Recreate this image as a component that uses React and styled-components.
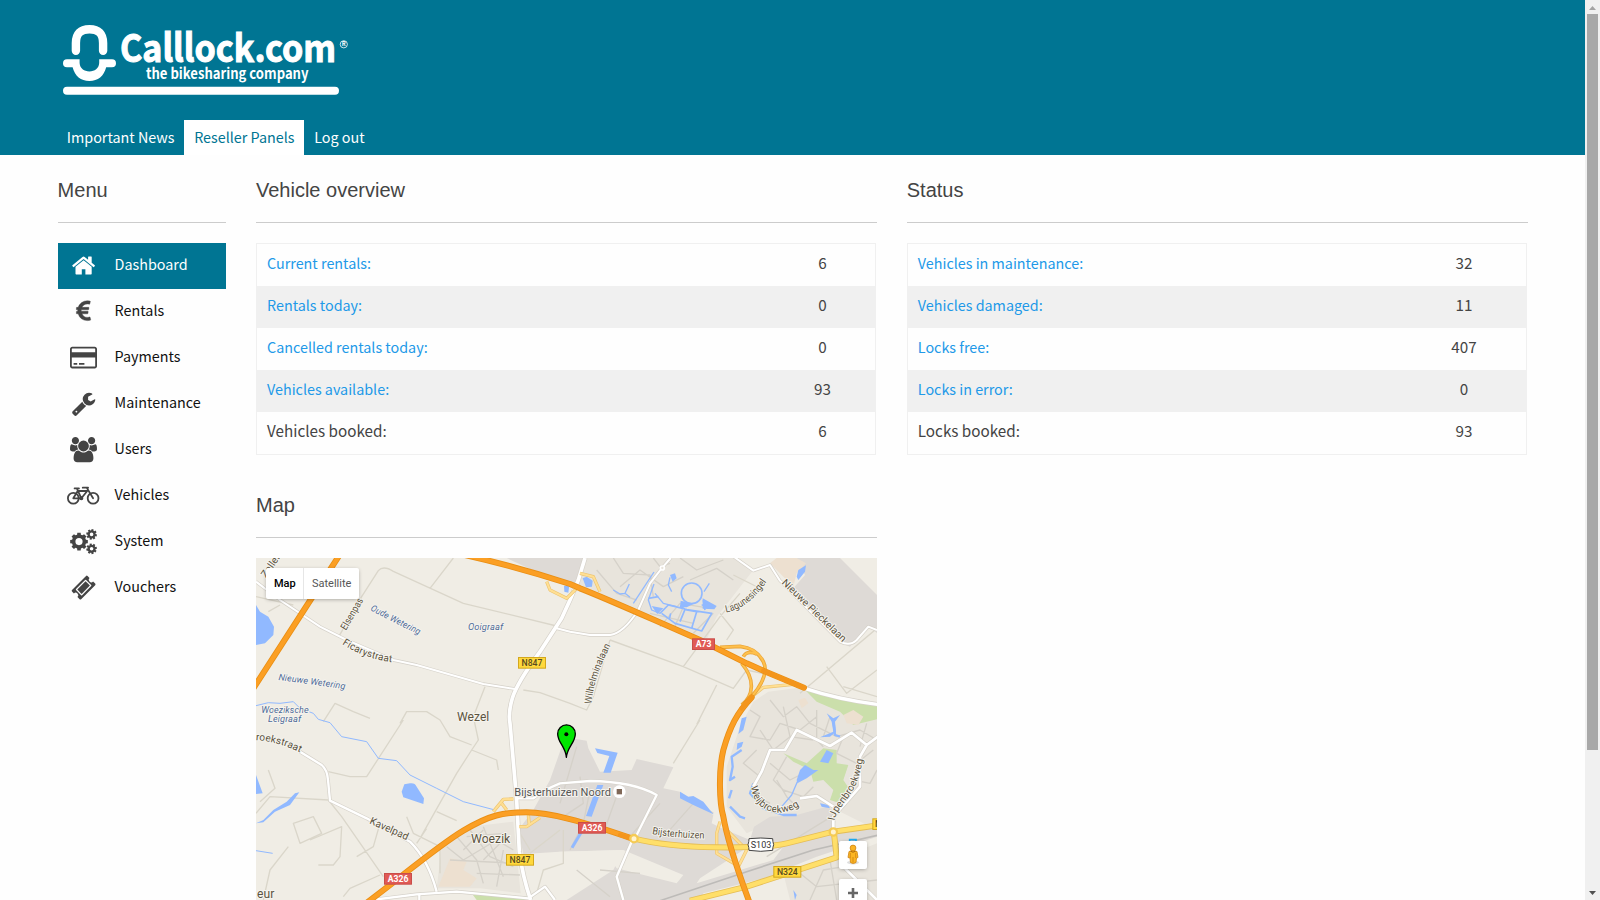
import React from "react";
import styled, { createGlobalStyle, css } from "styled-components";

const teal = "#007593";
const sans = '"Source Sans Pro", "Noto Sans CJK SC", sans-serif';

const GlobalStyle = createGlobalStyle`
  * { box-sizing: border-box; }
  html, body { margin: 0; height: 900px; overflow: hidden; background: #fefefe; }
  body { font-family: ${sans}; font-size: 14.35px; color: #444; }
`;

const Window = styled.div`
  display: flex;
  width: 1600px;
  height: 900px;
  overflow: hidden;
`;
const Page = styled.div`
  flex: 1;
  height: 900px;
  overflow: hidden;
`;
const Header = styled.header`
  display: flex;
  flex-direction: column;
  justify-content: space-between;
  height: 155px;
  padding: 20px 57px 0;
  background: ${teal};
`;
const Logo = styled.svg`
  display: block;
  width: 300px;
  height: 80px;
  text { font-family: ${sans}; fill: #fff; }
`;
const Tabs = styled.nav`
  display: flex;
`;
const Tab = styled.a`
  height: 35px;
  padding: 0 9.8px;
  line-height: 33px;
  white-space: nowrap;
  color: ${(p) => (p.$active ? teal : "#fff")};
  background: ${(p) => (p.$active ? "#fff" : "transparent")};
`;
const Columns = styled.main`
  display: grid;
  grid-template-columns: 168.4px 620.8px 621px;
  column-gap: 30px;
  padding: 20px 57px 0 57.6px;
`;
const Column = styled.div`
  min-width: 0;
`;
const Heading = styled.h2`
  margin: ${(p) => (p.$spaced ? "35px" : "0")} 0 20px;
  padding-bottom: 17px;
  border-bottom: 1px solid #ccc;
  font: 400 20px/30px "Liberation Sans", Arial, sans-serif;
  color: #444;
`;
const MenuItem = styled.a`
  display: grid;
  grid-template-columns: 51px 1fr;
  column-gap: 6px;
  align-items: center;
  height: 46px;
  color: ${(p) => (p.$active ? "#fff" : "#111")};
  background: ${(p) => (p.$active ? teal : "transparent")};
  svg {
    justify-self: center;
    color: ${(p) => (p.$active ? "#fff" : "#444")};
  }
`;
const MenuLabel = styled.span`
  line-height: 20px;
  padding-bottom: 5px;
`;
const Glyph = styled.svg`
  display: block;
  width: ${(p) => p.$w}px;
  height: 25.2px;
  fill: currentColor;
  overflow: visible;
`;
const Table = styled.div`
  width: 620px;
  border: 1px solid #f0f0f0;
`;
const Row = styled.div`
  display: grid;
  grid-template-columns: 1fr ${(p) => p.$valueWidth}px;
  height: 42px;
  line-height: 37px;
  font-size: 15.25px;
  &:nth-child(even) { background: #f0f0f0; }
`;
const Label = styled.span`
  padding-left: 10px;
  ${(p) => p.$link && css`
    font-size: 14.35px;
    color: #2199e8;
  `}
`;
const Value = styled.span`
  text-align: center;
`;
const MapBox = styled.div`
  position: relative;
  height: 342px;
  overflow: hidden;
`;
const MapSvg = styled.svg`
  display: block;
  width: 621px;
  height: 342px;
  font-family: Roboto, sans-serif;
`;
const MapType = styled.div`
  position: absolute;
  top: 10px;
  left: 10px;
  display: flex;
  height: 31px;
  border-radius: 2px;
  background: #fff;
  box-shadow: 0 1px 4px -1px rgba(0, 0, 0, 0.4);
  font: 11px/31px Roboto, sans-serif;
`;
const TypeButton = styled.span`
  padding: 0 7.7px 0 ${(p) => (p.$active ? 8 : 7.6)}px;
  color: ${(p) => (p.$active ? "#000" : "#565656")};
  font-weight: ${(p) => (p.$active ? 500 : 400)};
  & + & { border-left: 1px solid #e6e6e6; }
`;
const MapTools = styled.div`
  position: absolute;
  top: 283px;
  right: 10px;
  display: grid;
  gap: 10px;
`;
const Tool = styled.div`
  display: grid;
  place-items: center;
  width: 28px;
  height: 28px;
  border-radius: 2px;
  background: #fff;
  box-shadow: 0 1px 4px -1px rgba(0, 0, 0, 0.4);
`;
const Scrollbar = styled.div`
  display: flex;
  flex-direction: column;
  align-items: center;
  width: 15px;
  height: 900px;
  background: #f0f0f0;
`;
const Arrow = styled.svg`
  display: block;
  width: 15px;
  height: 14px;
`;
const Thumb = styled.div`
  width: 11px;
  height: 736px;
  margin-bottom: auto;
  background: #a8a8a8;
`;

function gear(cx, cy, outer, inner, hole, turn = 0) {
  const pts = [];
  for (let i = 0; i < 8; i++) {
    const a = (i * Math.PI) / 4 + turn;
    [[-0.27, inner], [-0.19, outer], [0.19, outer], [0.27, inner]].forEach(([d, r]) =>
      pts.push(`${(cx + r * Math.cos(a + d)).toFixed(1)} ${(cy + r * Math.sin(a + d)).toFixed(1)}`)
    );
  }
  return `M${pts.join("L")}ZM${cx + hole} ${cy}a${hole} ${hole} 0 1 0 ${-2 * hole} 0a${hole} ${hole} 0 1 0 ${2 * hole} 0Z`;
}

const icons = {
  home: [1792, <path d="M1472 992v480q0 26-19 45t-45 19h-384v-384h-256v384h-384q-26 0-45-19t-19-45v-480q0-1 .5-3t.5-3l575-474 575 474q1 2 1 6zm223-69l-62 74q-8 9-21 11h-3q-13 0-21-7l-692-577-692 577q-12 8-24 7-13-2-21-11l-62-74q-8-10-7-23.5t11-21.5l719-599q32-26 76-26t76 26l244 204v-195q0-14 9-23t23-9h192q14 0 23 9t9 23v408l219 182q10 8 11 21.5t-7 23.5z" />],
  euro: [1792, <path stroke="currentColor" strokeWidth="30" d="M1360 1307l35 159q3 12-3 22.5t-17 14.5l-5 1q-4 2-10.5 3.5t-16 4.5-21.5 5.5-25.5 5-30 5-33.5 4.5-36.5 3-38.5 1q-234 0-409-130.5t-238-351.5h-95q-13 0-22.5-9.5t-9.5-22.5v-113q0-13 9.5-22.5t22.5-9.5h66q-2-57 1-105h-67q-14 0-23-9t-9-23v-114q0-14 9-23t23-9h98q67-210 243.5-338t400.5-128q102 0 194 23 11 3 20 15 6 11 3 24l-43 159q-3 13-14 19.5t-24 2.5l-4-1q-4-1-11.5-2.5l-17.5-3.5-22.5-3.5-26-3-29-2.5-29.5-1q-126 0-226 64t-150 176h468q16 0 25 12 10 12 7 26l-24 114q-5 26-32 26h-488q-3 37 0 105h459q15 0 25 12 9 12 6 27l-24 112q-2 11-11 18.5t-20 7.5h-387q48 117 149.5 185.5t228.5 68.5q18 0 36-1.5t33.5-3.5 29.5-4.5 24.5-5 18.5-4.5l12-3 5-2q13-5 26 2 12 7 15 21z" />],
  card: [1920, <path fillRule="evenodd" d="M160 128h1600q66 0 113 47t47 113v1216q0 66-47 113t-113 47H160q-66 0-113-47T0 1504V288q0-66 47-113t113-47zm0 128q-32 0-32 32v224h1664V288q0-32-32-32zM128 896v608q0 32 32 32h1600q32 0 32-32V896zM256 1408v-128h256v128zm384 0v-128h384v128z" />],
  wrench: [1792, <path d="M448 1472q0-26-19-45t-45-19-45 19-19 45 19 45 45 19 45-19 19-45zm644-420l-682 682q-37 37-90 37-52 0-91-37l-106-108q-38-36-38-90 0-53 38-91l681-681q39 98 114.5 173.5t173.5 114.5zm634-435q0 39-23 106-47 134-164.5 217.5t-258.5 83.5q-185 0-316.5-131.5t-131.5-316.5 131.5-316.5 316.5-131.5q58 0 121.5 16.5t107.5 46.5q16 11 16 28t-16 28l-293 169v224l193 107q5-3 79-48.5t135.5-81 70.5-35.5q15 0 23.5 10t8.5 25z" />],
  users: [1920, <path d="M593 896q-162 5-265 128h-134q-82 0-138-40.5t-56-118.5q0-353 124-353 6 0 43.5 21t97.5 42.5 119 21.5q67 0 133-23-5 37-5 66 0 139 81 256zm1071 637q0 120-73 189.5t-194 69.5h-874q-121 0-194-69.5t-73-189.5q0-53 3.5-103.5t14-109 26.5-108.5 43-97.5 62-81 85.5-53.5 111.5-20q10 0 43 21.5t73 48 107 48 135 21.5 135-21.5 107-48 73-48 43-21.5q61 0 111.5 20t85.5 53.5 62 81 43 97.5 26.5 108.5 14 109 3.5 103.5zm-1024-1277q0 106-75 181t-181 75-181-75-75-181 75-181 181-75 181 75 75 181zm704 384q0 159-112.5 271.5t-271.5 112.5-271.5-112.5-112.5-271.5 112.5-271.5 271.5-112.5 271.5 112.5 112.5 271.5zm576 225q0 78-56 118.5t-138 40.5h-134q-103-123-265-128 81-117 81-256 0-29-5-66 66 23 133 23 59 0 119-21.5t97.5-42.5 43.5-21q124 0 124 353zm-128-609q0 106-75 181t-181 75-181-75-75-181 75-181 181-75 181 75 75 181z" />],
  bike: [2304, (
    <g fill="none" stroke="currentColor" strokeWidth="128" strokeLinecap="round" strokeLinejoin="round">
      <circle cx="448" cy="1088" r="384" />
      <circle cx="1856" cy="1088" r="384" />
      <path d="M448 1088L760 570H1440L1020 1088H448M1020 1088L700 390M540 384H850M1856 1088L1400 330H1120M1400 330H1500" />
      <circle cx="1020" cy="1088" r="80" fill="currentColor" />
    </g>
  )],
  cogs: [1920, <path fillRule="evenodd" d={gear(640, 896, 640, 510, 256) + gear(1536, 384, 384, 290, 128, 0.2) + gear(1536, 1408, 384, 290, 128, -0.2)} />],
  ticket: [1792, (
    <g transform="rotate(-45 896 896)">
      <path fillRule="evenodd" d="M190 436H1602Q1680 436 1680 514V706A180 180 0 0 0 1680 1066V1278Q1680 1356 1602 1356H190Q112 1356 112 1278V1066A180 180 0 0 0 112 706V514Q112 436 190 436ZM440 590Q390 590 390 640V1152Q390 1202 440 1202H1352Q1402 1202 1402 1152V640Q1402 590 1352 590Z" />
      <rect x="480" y="680" width="832" height="432" />
    </g>
  )],
};

function Icon({ name }) {
  const [width, shape] = icons[name];
  return (
    <Glyph $w={(width * 25.2) / 1792} viewBox={`0 0 ${width} 1792`}>
      {shape}
    </Glyph>
  );
}

const menu = [
  ["Dashboard", "home"],
  ["Rentals", "euro"],
  ["Payments", "card"],
  ["Maintenance", "wrench"],
  ["Users", "users"],
  ["Vehicles", "bike"],
  ["System", "cogs"],
  ["Vouchers", "ticket"],
];
const overview = [
  ["Current rentals:", 6],
  ["Rentals today:", 0],
  ["Cancelled rentals today:", 0],
  ["Vehicles available:", 93],
  ["Vehicles booked:", 6],
];
const status = [
  ["Vehicles in maintenance:", 32],
  ["Vehicles damaged:", 11],
  ["Locks free:", 407],
  ["Locks in error:", 0],
  ["Locks booked:", 93],
];

function StatTable({ rows, valueWidth }) {
  return (
    <Table>
      {rows.map(([label, value], i) => (
        <Row key={label} $valueWidth={valueWidth}>
          <Label $link={i < rows.length - 1}>{label}</Label>
          <Value>{value}</Value>
        </Row>
      ))}
    </Table>
  );
}

/* Map drawing units are a third of a pixel. */
const areas = [
  ["#dedad6", "M770 24H1010L975 115L900 85ZM1640 24H1770L1881 135V250L1855 225L1800 290L1765 275L1630 115L1665 75Z"],
  ["#e8e4dc", "M1008 24H1465L1510 60L1440 150L1400 200L1365 280L1180 195L978 110ZM1510 455L1555 425L1660 412L1740 460L1881 495V840L1760 780L1600 800L1490 850L1430 770L1430 650L1470 530Z"],
  ["#ede0d0", "M1560 40L1580 24H1640L1668 40L1640 70L1630 110L1590 70Z"],
  ["#dedad6", "M945 562L1010 572L1015 595L1050 665L1145 660L1160 627L1270 652L1240 715L1290 725L1390 795L1385 820L1415 835L1500 870L1512 830L1560 800L1640 795L1730 770L1760 790L1750 850L1881 830V860L1700 920L1600 960L1560 1000L1350 1050H950L1090 960L1120 900L930 905L820 912L805 840L850 780L900 690Z"],
  ["#e8e4dc", "M575 890L660 830L790 815L812 1030L690 1015L560 1015ZM1600 970L1700 935L1780 920L1881 880V1050H1590Z"],
  ["#ede0d0", "M600 925L650 935L640 960L680 985L660 1010H565Z"],
  ["#f0ede5", "M930 905L1120 900L1300 975L1280 1000L1100 955L1090 940L965 1000L820 1050V920ZM1480 900L1600 890L1570 930L1340 1000L1350 985ZM1360 1030L1600 970L1620 1050H1350Z"],
  ["#cbdfab", "M1660 415L1760 440L1881 465V508L1810 525L1770 485L1700 455ZM1600 610L1670 640L1720 595L1760 600V640L1795 645L1780 690L1800 720L1770 760L1740 750L1750 720L1720 690L1690 695L1680 660L1630 635ZM665 1030L830 1040V1050H680Z"],
  ["#ede0d0", "M1780 495L1810 480L1840 500L1825 525L1790 520ZM1645 450L1665 443L1675 460L1655 475Z"],
];
const minor = "M18 140L130 165M55 185L90 165M265 262L335 140L385 62Q400 45 430 64L640 160L920 228M540 115L610 24M820 420L870 428L960 460L1010 480L1030 440L1080 270M705 410L670 500L685 570L665 600L620 670L510 865M220 515L255 460L310 485L360 505M450 520L470 485L530 485L570 510L600 560L665 585M665 600L740 630L745 660M560 785L620 812M470 800L490 850L570 890V970M530 835L500 880M460 510L350 680L300 680L235 665M18 790L60 740L235 750L275 800L400 980M55 660L75 715L30 755M130 820L190 800L215 850L150 880ZM115 890L60 960L40 1050M205 945H250L270 920L275 830L180 870M390 820L370 890L320 920M280 1040L300 1015L390 975M1080 270L1300 350L1450 415L1490 360L1560 375M1300 350L1410 200L1470 130M1340 524L1400 405M1270 640L1350 510M1650 430L1881 235M1730 350L1790 430L1881 360M1780 410L1881 440M1450 75L1540 120M1410 190L1450 240L1430 270M810 850L840 900M840 910L930 840M860 1030L880 960L940 940V840";
const streets = [
  "M1090 24L1120 70L1200 75L1210 140M1110 110L1170 60L1240 110L1300 80M1040 60L1100 130L1160 150M1210 24L1230 50L1260 40M1290 24L1340 60L1420 30M1320 90L1400 55L1450 90M1230 230L1290 160L1380 175M1270 240L1300 170M1330 250L1390 190M1200 190L1330 220",
  "M1500 480L1530 500L1500 560L1560 570L1590 520L1650 540L1700 500M1560 450L1600 500L1640 470L1680 520L1760 560L1830 540L1881 570M1520 600L1480 640L1530 680L1500 730L1560 760M1560 640L1620 690L1680 660M1600 720L1660 740L1690 710M1690 560L1720 590M1780 560L1760 610L1820 640L1870 600M1810 690L1860 700L1881 660M1580 690L1610 740L1640 770M1530 540L1570 600L1620 560L1690 570M1600 470L1620 560M1700 480V570M1740 500L1720 560M1850 520L1830 590M1610 620L1570 690L1600 720",
  "M590 890L640 930L740 870L790 900M620 860L680 930L700 1000M660 840L720 920L790 950M700 830L760 980M600 930L800 940M680 970L810 975M1650 970L1700 1010L1881 990M1740 930L1760 1050M1680 1050L1720 960L1840 940M650 860L760 850M640 900L700 840M740 1010L760 900M700 930L770 860",
  "M980 590L930 760M990 680L1000 760L940 800M1060 850L1110 710M1020 720L1000 820L960 900M1130 870L1230 760M1250 850L1330 760M1050 960L1170 970M1550 920L1760 790M1330 750L1390 790M980 960L1080 1040",
];
const whiteRoads = [
  ["M1005 24L985 90L960 150L935 205L870 305Q800 400 787 445T780 520L800 750L808 905Q818 980 842 1050", 11],
  ["M18 95L90 150L210 230L290 270L430 330L500 345L700 402L795 417M920 235L960 245L1020 255H1080Q1120 250 1165 180L1200 100L1235 55L1262 24", 6],
  ["M1440 12L1510 62L1560 45L1590 92L1770 275Q1800 290 1820 270L1855 230L1881 240", 6],
  ["M1664 415Q1770 450 1890 464", 10],
  ["M150 605L215 645Q232 660 234 690L240 752L350 805L480 875Q535 930 560 1025M365 1050L500 1033L620 1025L835 1045L885 1010L915 1050M508 1035V1050", 7],
  ["M800 745H850Q880 720 930 700L1020 693Q1150 695 1220 735L1160 855L1145 875L1100 980L1120 1050", 7],
  ["M1510 710L1535 665L1560 600L1605 600L1640 540L1740 588L1805 548L1850 585L1890 555M1850 585L1830 620V710L1750 800V845M1650 745L1700 738L1750 770M1785 955L1881 1050", 8],
];
const water = "M18 165L30 185L55 200L72 230L70 255L45 280L18 285ZM480 700Q495 698 500 710L522 745L520 762L460 742L455 725L463 703ZM18 675L38 730L18 732ZM148 727L120 765L75 785L40 817L18 820L40 810L70 780L110 755L135 730ZM1035 595L1103 608L1082 668H1060L1078 618L1042 609ZM1042 705H1060L1025 800L1008 798ZM1290 725L1315 740L1330 738L1360 755L1390 793L1330 765L1290 745ZM1640 80L1645 60L1668 46L1665 65L1645 90ZM998 85L1010 80L1028 92L1026 110L1008 112ZM942 108L958 104L955 128L943 125ZM1640 690L1650 660L1665 645L1690 660H1705L1670 685L1642 700ZM1730 490L1750 505L1770 495L1755 515L1758 545L1740 560L1710 562L1750 545L1745 515ZM1730 600L1750 610L1735 640L1710 635ZM1462 580L1480 575L1475 590L1460 600ZM1475 505L1490 500L1480 540L1465 552ZM1260 75L1275 70L1280 85L1268 95ZM1710 760L1735 765L1740 775L1715 770ZM1630 1020L1640 1035L1635 1050Z";
const canals = [
  ["M18 467L55 458L90 460L130 455L150 475L190 490L205 508L240 518L275 560L350 575L385 625L440 632L480 675L560 715L640 755L735 780M18 902L68 910", 3],
  ["M1090 120L1110 132L1125 130L1140 142M1125 130L1138 102M1150 160L1212 66M1260 82L1255 105L1265 125M1212 102L1195 150L1205 180L1230 190M1215 130L1240 160L1280 170M1362 125L1378 100", 4],
  ["M1195 145L1225 140M1230 190L1255 165L1310 178M1235 190L1275 220L1355 243L1385 190L1305 178L1290 215M1300 155L1292 170L1310 180L1340 185L1325 235M1262 190L1258 208M1355 165L1395 168M1360 150L1365 180", 5],
  ["M1475 600L1445 620L1448 650L1440 690L1455 680M1437 745L1445 720M1440 770L1470 800L1485 805M1510 700L1500 730L1540 775L1600 795H1640M1750 510L1755 555L1770 560", 7],
  ["M1642 695L1625 735L1595 770", 4],
  ["M1005 828L966 893", 9],
];
const motorways = "M640 14Q800 50 960 102L990 115C1080 150 1200 205 1350 270L1490 340L1540 362L1662 413M268 16L160 183L10 415M1505 442C1460 490 1440 530 1420 600C1405 660 1408 760 1420 800C1430 860 1470 980 1498 1056M340 1066C450 985 560 890 640 842S760 787 830 787S1000 815 1145 865";
const yellowRoads = "M1150 865Q1250 890 1400 892T1610 880L1750 845L1890 825M1320 1052L1490 1010L1760 922L1752 850";
const ramps = "M1410 292L1470 289Q1520 295 1540 335T1505 440M1475 340Q1505 375 1504 410T1475 465M1480 320Q1490 300 1520 312";
const paleRamps = "M1505 440L1540 412L1630 403M990 70L1030 80L1050 125M980 115L950 145L900 120L890 95M790 747L760 748L730 785M755 760L770 780M808 830H830L870 803M835 795L838 825M1410 815L1400 850V910L1460 945M1430 840L1490 900L1460 960";

const roadText = "#5c5340";
const waterText = "#4e6b99";
const labels = [
  { t: "Oude Wetering", d: "M360 180Q440 222 530 266", w: 164, c: waterText, i: 1, s: 27 },
  { t: "Nieuwe Wetering", d: "M85 390Q180 402 300 420", w: 202, c: waterText, i: 1, s: 27 },
  { t: "Ooigraaf", d: "M654 240H800", w: 106, c: waterText, i: 1, s: 27 },
  { t: "Woeziksche", d: "M34 490H250", w: 142, c: waterText, i: 1, s: 27 },
  { t: "Leigraaf", d: "M54 517H250", w: 100, c: waterText, i: 1, s: 27 },
  { t: "Elsenpas", d: "M288 242L350 135", w: 105, s: 30 },
  { t: "Zellen", d: "M48 85L110 -5", w: 85, s: 30 },
  { t: "Ficarystraat", d: "M276 282Q350 330 440 338", w: 160, s: 30 },
  { t: "Wilhelminalaan", d: "M95 462Q98 390 155 280", x: 930, w: 186, s: 30 },
  { t: "Lagunesingel", d: "M498 187Q570 175 627 84", x: 930, w: 157, s: 30 },
  { t: "Nieuwe Pieckelaan", d: "M664 100L854 284", x: 930, w: 255, s: 30 },
  { t: "broekstraat", d: "M0 570Q80 570 158 612", w: 156, s: 30 },
  { t: "Kavelpad", d: "M357 820L490 880", w: 124, s: 31 },
  { t: "Bijsterhuizen", d: "M276 852Q350 865 450 866", x: 930, w: 158, s: 30 },
  { t: "Weijbroekweg", d: "M573 710C585 800 680 810 740 750", x: 930, w: 192, s: 30 },
  { t: "IJpenbroekweg", d: "M824 812C830 760 905 740 910 600", x: 930, w: 206, s: 30 },
  { t: "Wezel", d: "M621 513H800", w: 97, s: 36 },
  { t: "Woezik", d: "M663 879H900", w: 118, s: 36 },
  { t: "Bijsterhuizen Noord", d: "M793 737H1200", w: 290, s: 33, c: "#555" },
  { t: "eur", d: "M21 1045H200", w: 52, s: 36 },
];
const shields = [
  ["A73", 1326, 265, 69, "#e05a55", "#c94d49", "#fff"],
  ["A326", 984, 816, 84, "#e05a55", "#c94d49", "#fff"],
  ["A326", 402, 969, 84, "#e05a55", "#c94d49", "#fff"],
  ["N847", 804, 321, 84, "#ffd83d", "#d3a71d", "#574a20"],
  ["N847", 768, 912, 84, "#ffd83d", "#d3a71d", "#574a20"],
  ["N324", 1570, 948, 84, "#ffd83d", "#d3a71d", "#574a20"],
];

function CityMap() {
  return (
    <MapSvg viewBox="18 24 1863 1026" preserveAspectRatio="none">
      <rect x="18" y="24" width="1863" height="1026" fill="#f0ede5" />
      {areas.map(([fill, d]) => <path key={d} fill={fill} d={d} />)}
      <g fill="none" strokeLinejoin="round">
        <path d={minor} stroke="#dad6ca" strokeWidth="4" />
        {streets.map((d) => <path key={d} d={d} stroke="#d5d1c9" strokeWidth="4" />)}
        <circle cx="1325" cy="130" r="31" stroke="#91b9ff" strokeWidth="5" />
        {canals.map(([d, w]) => <path key={d} d={d} stroke="#91b9ff" strokeWidth={w} />)}
        <path d={water} fill="#91b9ff" />
        <path d="M1358 145L1400 168L1393 178L1358 176ZM1205 168L1240 175L1222 192ZM1292 152L1312 158L1335 160L1310 172H1290Z" fill="#91b9ff" />
        <path d="M1230 1052L1490 965L1690 900L1885 855" stroke="#bdbbb8" strokeWidth="5" />
        {whiteRoads.map(([d, w]) => <path key={d} d={d} stroke="#d5d1c9" strokeWidth={w + 4} />)}
        {whiteRoads.map(([d, w]) => <path key={d} d={d} stroke="#fff" strokeWidth={w} />)}
        <path d={paleRamps} stroke="#edc572" strokeWidth="10" />
        <path d={paleRamps} stroke="#ffdf93" strokeWidth="6" />
        <path d={yellowRoads} stroke="#e5bd54" strokeWidth="18" />
        <path d={yellowRoads} stroke="#ffdf69" strokeWidth="13" />
        <path d={ramps} stroke="#e9a53a" strokeWidth="11" />
        <path d={ramps} stroke="#ffc04c" strokeWidth="6" />
        <path d={motorways} stroke="#e98f15" strokeWidth="18" strokeLinecap="round" />
        <path d={motorways} stroke="#fb9f24" strokeWidth="13" strokeLinecap="round" />
        <path d="M1540 362L1662 413M1505 442L1475 475M1110 855L1145 865" stroke="#f3951c" strokeWidth="13" strokeLinecap="round" />
        <circle cx="1152" cy="866" r="11" fill="#fff3cf" stroke="#f5cb55" strokeWidth="7" />
        <circle cx="1750" cy="846" r="11" fill="#fff3cf" stroke="#f5cb55" strokeWidth="7" />
        <circle cx="1237" cy="54" r="6" fill="#e8e4dc" stroke="#fff" strokeWidth="5" />
      </g>
      <path d="M1799 884V869H1818V884" fill="none" stroke="#1cabf2" strokeWidth="5" />
      {labels.map(({ t, d, w, s, i, c = roadText, x = 0 }, n) => (
        <g key={t} transform={`translate(${x} 0)`}>
          <path id={`label-${n}`} d={d} fill="none" />
          <text fontSize={s} fontStyle={i ? "italic" : "normal"} fill={c} stroke="#f5f3ee" strokeWidth="6" strokeLinejoin="round" paintOrder="stroke">
            <textPath href={`#label-${n}`} textLength={w} lengthAdjust="spacingAndGlyphs">{t}</textPath>
          </text>
        </g>
      ))}
      {shields.map(([t, x, y, w, fill, edge, color]) => (
        <g key={`${x}-${y}`}>
          <rect x={x + 1.5} y={y + 1.5} width={w - 3} height="32" fill={fill} stroke={edge} strokeWidth="3" />
          <text x={x + w / 2} y={y + 27} fontSize="26" fontWeight={color === "#fff" ? 700 : 500} textAnchor="middle" fill={color}>{t}</text>
        </g>
      ))}
      <rect x="1868.5" y="806.5" width="40" height="32" fill="#ffd83d" stroke="#d3a71d" strokeWidth="3" />
      <text x="1875" y="832" fontSize="26" fontWeight="500" fill="#574a20">N</text>
      <path d="M1497 866Q1532 862 1568 866Q1568 875 1571 884Q1568 892 1568 901Q1532 907 1497 901Q1497 892 1494 884Q1497 875 1497 866Z" fill="#fff" stroke="#444" strokeWidth="3" />
      <text x="1533" y="894" fontSize="27" textAnchor="middle" fill="#333">S103</text>
      <circle cx="1108" cy="725" r="19" fill="#fff" />
      <rect x="1100" y="717" width="16" height="16" fill="#806858" />
      <path d="M949 622C947 590 923 578 923 551A26.5 26.5 0 0 1 976 551C976 578 952 590 949 622Z" fill="#00e600" stroke="#000" strokeWidth="4" strokeLinejoin="round" />
      <circle cx="949" cy="553" r="6" />
    </MapSvg>
  );
}

export default function App() {
  return (
    <Window>
      <GlobalStyle />
      <Page>
        <Header>
          <Logo viewBox="57 20 300 80">
            <g fill="none" stroke="#fff" strokeLinecap="round">
              <path d="M75.9 50.8V43Q75.9 29.2 89.5 29.2T103.1 43V50.8" strokeWidth="8.4" />
              <path d="M67 90.8H335" strokeWidth="8" />
            </g>
            <path d="M67 59.2H79.6V63C80 68.5 84 71.4 89.4 71.4S98.8 68.5 99.2 63V59.2H112A4 4 0 0 1 112 67.2H106.2C104 76 98 80.9 89.4 80.9S74.8 76 72.6 67.2H67A4 4 0 0 1 67 59.2Z" fill="#fff" />
            <text x="120" y="61.5" fontSize="38" fontWeight="700" textLength="216" lengthAdjust="spacingAndGlyphs" stroke="#fff" strokeWidth="1.1">Calllock.com</text>
            <text x="146" y="78.8" fontSize="14.6" fontWeight="700" textLength="162.5" lengthAdjust="spacingAndGlyphs">the bikesharing company</text>
            <circle cx="343.8" cy="44.3" r="3.6" fill="none" stroke="#fff" strokeWidth=".8" />
            <text x="343.8" y="46.4" fontSize="5.8" fontWeight="700" textAnchor="middle">R</text>
          </Logo>
          <Tabs>
            <Tab>Important News</Tab>
            <Tab $active>Reseller Panels</Tab>
            <Tab>Log out</Tab>
          </Tabs>
        </Header>
        <Columns>
          <Column>
            <Heading>Menu</Heading>
            {menu.map(([label, icon], i) => (
              <MenuItem key={label} $active={i === 0}>
                <Icon name={icon} />
                <MenuLabel>{label}</MenuLabel>
              </MenuItem>
            ))}
          </Column>
          <Column>
            <Heading>Vehicle overview</Heading>
            <StatTable rows={overview} valueWidth={105} />
            <Heading $spaced>Map</Heading>
            <MapBox>
              <CityMap />
              <MapType>
                <TypeButton $active>Map</TypeButton>
                <TypeButton>Satellite</TypeButton>
              </MapType>
              <MapTools>
                <Tool>
                  <svg width="14" height="22" viewBox="0 0 14 22">
                    <ellipse cx="7" cy="18.6" rx="6" ry="1.8" fill="#ddd" />
                    <path d="M3 7.5Q7 5.5 11 7.5L12 13.5L10.5 14L10 18.5Q7 20.5 4.5 18.5L4 14L2 13.5Z" fill="#fbb524" stroke="#cf8413" strokeWidth=".8" />
                    <path d="M7 13V18.5M4.3 9V14M9.7 9V14" stroke="#cf8413" strokeWidth=".8" />
                    <circle cx="7" cy="4" r="2.9" fill="#fbb524" stroke="#cf8413" strokeWidth=".8" />
                    <path d="M4.5 7.2Q7 9.2 9.5 7.2" fill="none" stroke="#a9680d" />
                  </svg>
                </Tool>
                <Tool>
                  <svg width="12" height="12" viewBox="0 0 12 12">
                    <path d="M6 1V11M1 6H11" stroke="#666" strokeWidth="2.6" />
                  </svg>
                </Tool>
              </MapTools>
            </MapBox>
          </Column>
          <Column>
            <Heading>Status</Heading>
            <StatTable rows={status} valueWidth={123.5} />
          </Column>
        </Columns>
      </Page>
      <Scrollbar>
        <Arrow viewBox="0 0 15 14"><path d="M4 10L7.5 6L11 10Z" fill="#a3a3a3" /></Arrow>
        <Thumb />
        <Arrow viewBox="0 0 15 14"><path d="M4 5L7.5 9L11 5Z" fill="#505050" /></Arrow>
      </Scrollbar>
    </Window>
  );
}
